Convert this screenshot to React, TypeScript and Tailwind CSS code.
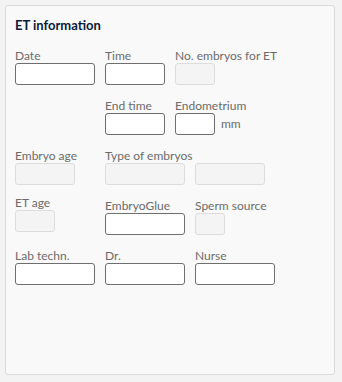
import React from "react";

const font = { fontFamily: "Lato, 'Open Sans', sans-serif" };

const Field = ({
  label,
  width,
  inputs,
}: {
  label?: string;
  width: number;
  inputs: { w: number; disabled?: boolean }[];
}) => (
  <div className="flex shrink-0 flex-col" style={{ width }}>
    <div className="h-[15px] whitespace-nowrap text-[12px] leading-[15px] text-[#6b6b6b]">
      {label ?? ""}
    </div>
    {inputs.length > 0 && (
      <div className="flex gap-[10px]">
        {inputs.map((i, k) => (
          <div
            key={k}
            className={
              i.disabled
                ? "h-[22px] rounded-[3px] border border-[#dcdcdc] bg-[#f4f4f4]"
                : "h-[22px] rounded-[3px] border border-[#6e6e6e] bg-white"
            }
            style={{ width: i.w }}
          />
        ))}
      </div>
    )}
  </div>
);

export default function App() {
  return (
    <div className="h-[382px] w-[342px] bg-[#f3f3f3] p-[5px]" style={font}>
      <div className="flex h-[370px] w-[330px] flex-col rounded-[3px] border border-[#dadada] bg-[#f9f9f9] pl-[9px] pt-[11px]">
        <div className="text-[13px] font-bold leading-[16px] text-[#0b1a3c]">ET information</div>
        <div className="mt-[15px] flex flex-col gap-[13px]">
          <div className="flex gap-[10px]">
            <Field label="Date" width={80} inputs={[{ w: 80 }]} />
            <Field label="Time" width={60} inputs={[{ w: 60 }]} />
            <Field label="No. embryos for ET" width={120} inputs={[{ w: 40, disabled: true }]} />
          </div>
          <div className="flex gap-[10px]">
            <Field width={80} inputs={[]} />
            <Field label="End time" width={60} inputs={[{ w: 60 }]} />
            <div className="flex shrink-0 flex-col">
              <div className="h-[15px] text-[12px] leading-[15px] text-[#6b6b6b]">Endometrium</div>
              <div className="flex items-center gap-[6px]">
                <div className="h-[22px] w-[40px] rounded-[3px] border border-[#6e6e6e] bg-white" />
                <span className="text-[12px] text-[#6b6b6b]">mm</span>
              </div>
            </div>
          </div>
          <div className="flex gap-[10px]">
            <Field label="Embryo age" width={80} inputs={[{ w: 60, disabled: true }]} />
            <Field label="Type of embryos" width={160} inputs={[{ w: 80, disabled: true }, { w: 70, disabled: true }]} />
          </div>
          <div className="flex gap-[10px]">
            <div className="-mt-[3px]">
              <Field label="ET age" width={80} inputs={[{ w: 40, disabled: true }]} />
            </div>
            <Field label="EmbryoGlue" width={80} inputs={[{ w: 80 }]} />
            <Field label="Sperm source" width={80} inputs={[{ w: 30, disabled: true }]} />
          </div>
          <div className="flex gap-[10px]">
            <Field label="Lab techn." width={80} inputs={[{ w: 80 }]} />
            <Field label="Dr." width={80} inputs={[{ w: 80 }]} />
            <Field label="Nurse" width={80} inputs={[{ w: 80 }]} />
          </div>
        </div>
      </div>
    </div>
  );
}
